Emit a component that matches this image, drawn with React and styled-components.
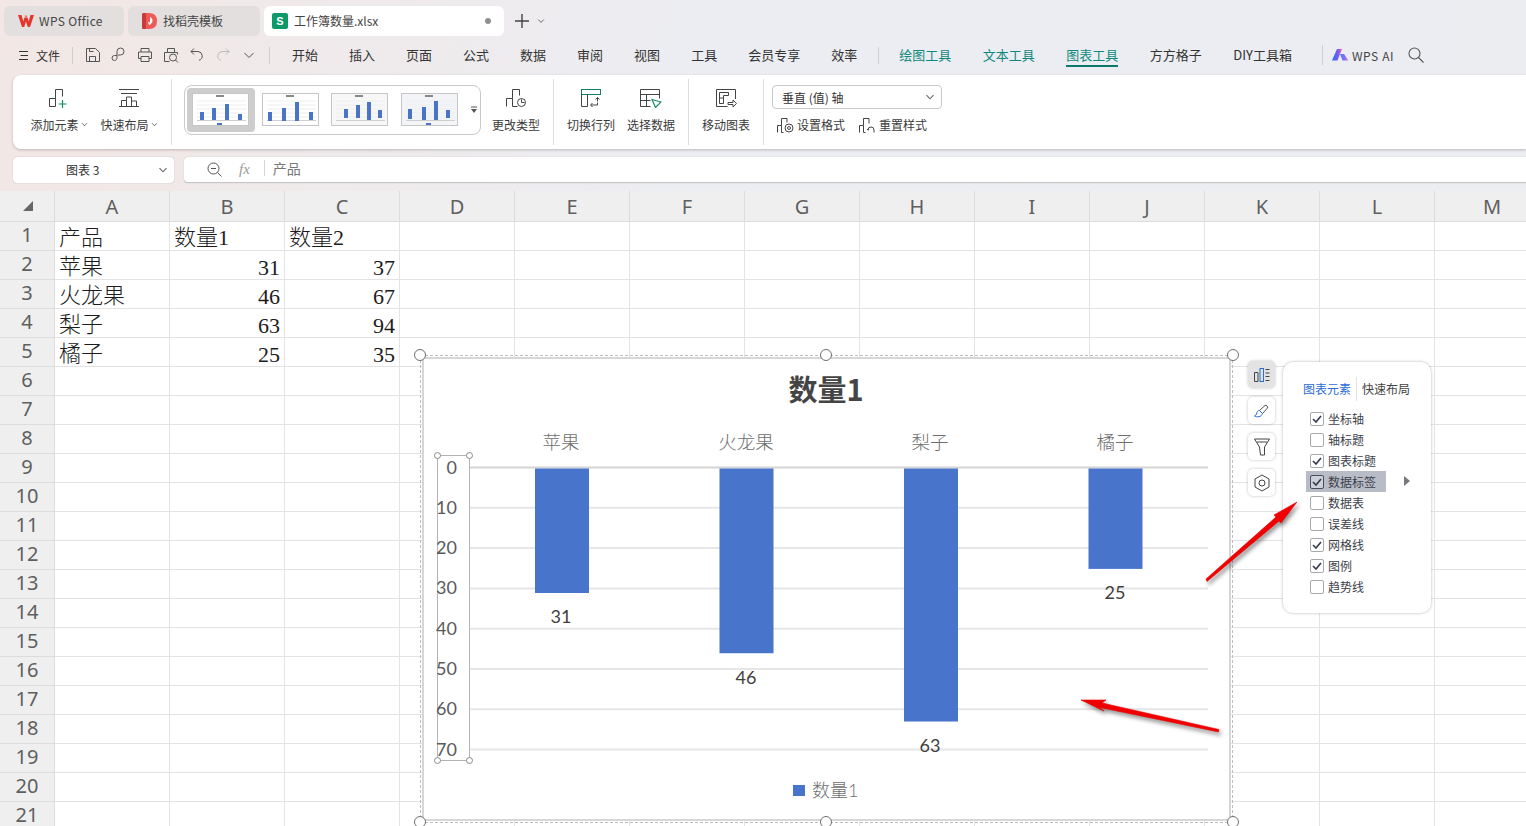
import React from 'react';
import styled, { createGlobalStyle } from 'styled-components';

const CJK = '"Noto Sans CJK SC", "Noto Sans", sans-serif';
const TEAL = '#0f8a7c';

const GlobalStyle = createGlobalStyle`
    html, body { margin: 0; padding: 0; overflow: hidden; }
    body { font-family: ${CJK}; color: #333; }
`;

const Page = styled.div`
    position: relative;
    width: 1526px;
    height: 826px;
    overflow: hidden;
    display: flex;
    flex-direction: column;
    background: linear-gradient(100deg, #f2e7e4 0, #ecedf2 42%, #ecedf1 100%);
    & > * { flex: none; }
`;

/* title tabs */
const TabBar = styled.div`
    height: 38px;
    box-sizing: border-box;
    padding: 6px 0 2px 4px;
    display: flex;
    align-items: stretch;
    gap: 4px;
`;

const Tab = styled.div`
    width: ${p => p.$w}px;
    box-sizing: border-box;
    padding-left: ${p => p.$pad}px;
    padding-bottom: 1px;
    display: flex;
    align-items: center;
    gap: ${p => p.$gap}px;
    border-radius: 6px;
    font-size: 12px;
    color: #444;
    background: ${p => (p.$active ? '#ffffff' : '#e2dfde')};
`;

const LatinTitle = styled.span`
    letter-spacing: 0.35px;
`;

const TabDot = styled.span`
    width: 6px;
    height: 6px;
    margin-left: auto;
    margin-right: 13px;
    border-radius: 50%;
    background: #8f8f8f;
`;

const SheetBadge = styled.span`
    width: 16px;
    height: 16px;
    border-radius: 2px;
    background: #0e9968;
    color: #fff;
    font: bold 11px "Liberation Sans", sans-serif;
    display: flex;
    align-items: center;
    justify-content: center;
`;

const NewTab = styled.div`
    margin-left: 7px;
    display: flex;
    align-items: center;
    gap: 8px;
`;

/* menu row */
const MenuBar = styled.div`
    height: 37px;
    box-sizing: border-box;
    padding: 0 0 3px 19px;
    display: flex;
    align-items: center;
`;

const FileLabel = styled.span`
    font-size: 12px;
    margin-left: 8px;
    color: #333;
`;

const QuickIcons = styled.div`
    display: flex;
    gap: 10px;
`;

const MenuDivider = styled.span`
    width: 1px;
    height: ${p => p.$h || 17}px;
    background: #cfcfd2;
    margin-left: ${p => p.$l}px;
    margin-right: ${p => p.$r}px;
`;

const MenuTabs = styled.div`
    display: flex;
    gap: ${p => p.$gap || 31}px;
`;

const MenuTab = styled.span`
    position: relative;
    font-size: 13px;
    line-height: 20px;
    color: ${p => (p.$tool ? TEAL : '#333')};
    &::after {
        content: '';
        display: ${p => (p.$active ? 'block' : 'none')};
        position: absolute;
        left: 0;
        right: 0;
        bottom: -2px;
        height: 2px;
        background: #0b7a6c;
    }
`;

const AiLabel = styled.span`
    margin-left: 3px;
    font-size: 12px;
    letter-spacing: 0.6px;
    color: #444;
`;

const SearchSlot = styled.span`
    margin-left: 14px;
    display: flex;
`;

/* ribbon */
const Ribbon = styled.div`
    height: 74px;
    margin-left: 13px;
    padding: 4px 0;
    box-sizing: border-box;
    display: flex;
    background: #fff;
    border-radius: 8px 0 0 8px;
    box-shadow: 0 1px 3px rgba(0, 0, 0, 0.22);
`;

const Section = styled.div`
    width: ${p => p.$w}px;
    box-sizing: border-box;
    padding-left: ${p => p.$pad}px;
    display: flex;
    border-right: ${p => (p.$last ? 'none' : '1px solid #dedede')};
`;

const RibbonButton = styled.div`
    width: ${p => p.$w}px;
    padding-top: 8px;
    display: flex;
    flex-direction: column;
    align-items: center;
`;

const RibbonIcon = styled.div`
    height: 22px;
    display: flex;
    align-items: center;
`;

const RibbonLabel = styled.div`
    margin-top: 7px;
    font-size: 12px;
    line-height: 17px;
    color: #3a3a3a;
    white-space: nowrap;
    display: flex;
    align-items: center;
    gap: 2px;
`;

const Gallery = styled.div`
    width: 297px;
    height: 50px;
    margin-top: 6px;
    box-sizing: border-box;
    padding: 2px;
    display: flex;
    align-items: center;
    border: 1px solid #c9c9c9;
    border-radius: 8px;
`;

const ThumbSlot = styled.div`
    width: 68px;
    height: 44px;
    margin-right: 2px;
    display: flex;
    align-items: center;
    justify-content: center;
    border-radius: 4px;
    background: ${p => (p.$selected ? '#cdcdcd' : 'transparent')};
`;

const GalleryMore = styled.div`
    margin-left: 4px;
    display: flex;
`;

const AxisColumn = styled.div`
    display: flex;
    flex-direction: column;
    margin-top: 6px;
`;

const AxisSelect = styled.div`
    width: 170px;
    height: 24px;
    box-sizing: border-box;
    padding: 0 6px 0 9px;
    display: flex;
    align-items: center;
    justify-content: space-between;
    border: 1px solid #c9c9c9;
    border-radius: 4px;
    font-size: 12px;
    color: #333;
`;

const AxisActions = styled.div`
    margin-top: 7px;
    margin-left: 5px;
    display: flex;
    gap: 14px;
`;

const AxisAction = styled.div`
    display: flex;
    align-items: center;
    gap: 3px;
    font-size: 12px;
    line-height: 17px;
    color: #3a3a3a;
`;

/* name box and formula bar */
const FormulaRow = styled.div`
    height: 26px;
    margin-top: 8px;
    padding-left: 13px;
    display: flex;
    gap: 10px;
`;

const NameBox = styled.div`
    width: 161px;
    box-sizing: border-box;
    padding: 0 6px 1px 53px;
    display: flex;
    align-items: center;
    justify-content: space-between;
    background: #fff;
    border-radius: 4px;
    box-shadow: 0 0 1px rgba(0, 0, 0, 0.35);
    font-size: 12px;
    color: #333;
`;

const FormulaBox = styled.div`
    flex: 1;
    box-sizing: border-box;
    padding-left: 23px;
    display: flex;
    align-items: center;
    background: #fff;
    border-radius: 4px 0 0 4px;
    border-bottom: 1px solid #c6c6c6;
    box-shadow: 0 0 1px rgba(0, 0, 0, 0.3);
`;

const FxMark = styled.span`
    margin-left: 17px;
    font: italic 15px "Liberation Serif", serif;
    color: #9a9a9a;
`;

const FormulaText = styled.span`
    margin: -3px 0 0 14px;
    padding-left: 8px;
    border-left: 1px solid #d5d5d5;
    font-size: 14px;
    line-height: 16px;
    color: #777;
`;

/* sheet */
const Sheet = styled.div`
    margin-top: 8px;
    display: grid;
    grid-template-columns: 55px repeat(13, 115px);
    grid-template-rows: 31px repeat(21, 29px);
    background: #fff;
`;

const Corner = styled.div`
    background: #efefef;
    border-right: 1px solid #dcdcdc;
    border-bottom: 1px solid #dcdcdc;
    display: flex;
    align-items: center;
    justify-content: center;
    padding-left: 2px;
`;

const ColHeader = styled.div`
    background: #efefef;
    border-right: 1px solid #dcdcdc;
    border-bottom: 1px solid #dcdcdc;
    display: flex;
    align-items: center;
    justify-content: center;
    font: 20px "Noto Sans", sans-serif;
    color: #5f5f5f;
`;

const RowHeader = styled(ColHeader)`
    align-items: flex-start;
    line-height: 25px;
`;

const Cell = styled.div`
    box-sizing: border-box;
    border-right: 1px solid #e3e3e3;
    border-bottom: 1px solid #e3e3e3;
    padding: 0 4px 0 ${p => (p.$num ? 0 : 4)}px;
    display: flex;
    align-items: flex-end;
    justify-content: ${p => (p.$num ? 'flex-end' : 'flex-start')};
    font: 300 22px/${p => (p.$num ? 22 : 24)}px "Liberation Serif", "Noto Sans CJK SC", serif;
    color: #1c1c1c;
    white-space: nowrap;
    overflow: visible;
`;

/* floating chart */
const ChartFrame = styled.div`
    position: absolute;
    left: 420px;
    top: 355px;
    width: 813px;
    height: 468px;
    box-sizing: border-box;
    border: 1px dashed #bdbdbd;
    padding: 1px;
`;

const ChartPaper = styled.div`
    width: 100%;
    height: 100%;
    box-sizing: border-box;
    border: 2px solid #d6d6d6;
    background: #fff;
    overflow: hidden;
`;

const ChartSvg = styled.svg`
    display: block;
    margin: -4px 0 0 -4px;
`;

const Handle = styled.span`
    position: absolute;
    width: 10px;
    height: 10px;
    left: ${p => p.$x - 6}px;
    top: ${p => p.$y - 6}px;
    background: #fff;
    border: 1px solid #6f6f6f;
    border-radius: 50%;
`;

const SmallHandle = styled(Handle)`
    width: 5px;
    height: 5px;
    left: ${p => p.$x - 3}px;
    top: ${p => p.$y - 3}px;
    border-color: #8a8a8a;
`;

const SideButtons = styled.div`
    position: absolute;
    left: 1248px;
    top: 361px;
    display: flex;
    flex-direction: column;
    gap: 9px;
`;

const SideButton = styled.div`
    width: 27px;
    height: 27px;
    display: flex;
    align-items: center;
    justify-content: center;
    border-radius: 5px;
    background: ${p => (p.$active ? '#e3e3e3' : '#fff')};
    box-shadow: 0 0 3px rgba(0, 0, 0, 0.25);
`;

const Popup = styled.div`
    position: absolute;
    left: 1283px;
    top: 362px;
    width: 148px;
    height: 251px;
    box-sizing: border-box;
    padding: 17px 0 0 20px;
    background: #fff;
    border-radius: 10px;
    box-shadow: 0 0 3px rgba(0, 0, 0, 0.3);
`;

const PopupTabs = styled.div`
    display: flex;
    align-items: center;
    font-size: 12px;
    line-height: 20px;
    height: 20px;
`;

const PopupTab = styled.span`
    color: ${p => (p.$active ? '#2b6cd6' : '#444')};
`;

const PopupSep = styled.span`
    width: 1px;
    height: 24px;
    margin: 0 5px;
    background: #e2e2e2;
`;

const CheckList = styled.div`
    margin: 9px 0 0 3px;
    display: flex;
    flex-direction: column;
`;

const CheckRow = styled.div`
    position: relative;
    width: 80px;
    height: 21px;
    box-sizing: border-box;
    padding-left: 4px;
    display: flex;
    align-items: center;
    gap: 4px;
    font-size: 12px;
    color: #3c3f4a;
    background: ${p => (p.$hover ? '#b8bcc6' : 'transparent')};
`;

const CheckBox = styled.span`
    width: 14px;
    height: 14px;
    box-sizing: border-box;
    display: flex;
    align-items: center;
    justify-content: center;
    border: 1px solid ${p => (p.$hover ? '#4a4e5e' : '#a8a8b0')};
    border-radius: 2px;
    background: ${p => (p.$hover ? '#cdd0d8' : '#fff')};
`;

const SubArrow = styled.span`
    position: absolute;
    left: 98px;
    top: 5px;
    width: 0;
    height: 0;
    border-left: 6px solid #77777d;
    border-top: 5px solid transparent;
    border-bottom: 5px solid transparent;
`;

const Annotation = styled.svg`
    position: absolute;
    left: ${p => p.$x}px;
    top: ${p => p.$y}px;
    overflow: visible;
    filter: drop-shadow(2px 3px 2px rgba(0, 0, 0, 0.45));
`;

const Ico = ({ w = 20, h = 20, box, color = '#444', sw = 1, children }) => (
    <svg width={w} height={h} viewBox={box || `0 0 ${w} ${h}`} fill="none" stroke={color} strokeWidth={sw}>
        {children}
    </svg>
);

const Chevron = ({ size = 10, color = '#666' }) => (
    <Ico w={size} h={size} box="0 0 10 10" color={color} sw={1.1}>
        <path d="M1.5 3.2 5 6.8l3.5-3.6" />
    </Ico>
);

const BARS = 'M.5 18.5v-8h6v8zM6.5 10.5v-9h7v7';

const WpsLogo = () => (
    <svg width="16" height="14" viewBox="0 0 16 14">
        <path d="M0 1h3.500l1.800 6.500L6.500 3.500h3l1.200 4L12.500 1H16l-4 12h-2.200L8 7.500 6.200 13H4z" fill="#e8352b" />
        <path d="M8 1 6.800 2.800h2.400z" fill="#e8352b" />
    </svg>
);

const TemplateLogo = () => (
    <svg width="15" height="16" viewBox="0 0 15 16">
        <path d="M0 1.500Q0 0 1.500 0H7q8 0 8 8t-8 8H1.500Q0 16 0 14.500z" fill="#ee5b56" />
        <path d="M0 1.500Q0 0 1.500 0H4v16H1.500Q0 16 0 14.500z" fill="#c93b3b" />
        <path d="M8.500 3.500c1 2 3 3.500 1.500 6-.7 1.200-1.700 1.800-2.500 2.800-.9-1.300-1.700-2.500-1-4 .3 1 .8 1.300 1.300 1.500.4-2 .2-4.500.7-6.300z" fill="#fff" />
    </svg>
);

const AiLogo = () => (
    <svg width="17" height="12" viewBox="0 0 17 12">
        <defs>
            <linearGradient id="aiGrad" x1="0" x2="1" y1="0" y2="0">
                <stop offset="0" stopColor="#2f6bff" />
                <stop offset="0.55" stopColor="#6a5cf5" />
                <stop offset="1" stopColor="#ff5fa8" />
            </linearGradient>
        </defs>
        <path d="M5 0h5L5.500 11.500H0z" fill="url(#aiGrad)" />
        <path d="M8 5h4l4.500 6.500h-6z" fill="url(#aiGrad)" opacity="0.85" />
    </svg>
);

const SearchIcon = () => (
    <Ico w={16} h={16} color="#555" sw={1.1}>
        <circle cx="6.500" cy="6.500" r="5.500" />
        <path d="m10.500 10.500 5 5" />
    </Ico>
);

const QUICK_ICONS = [
    <g key="s"><path d="M1.500 1.500h9l4 4v9h-13z" /><path d="M4.500 14.500v-5h6v5M4.500 1.500v3h4" /></g>,
    <g key="k"><path d="M6 10V4.500a3.500 3.500 0 1 1 3.500 3.500H7" /><path d="M6 8.500H3.500a2.500 2.500 0 1 0 0 5c2 0 2.500-1.500 2.500-3.500" /></g>,
    <g key="p"><path d="M4 5V1.500h8V5M4 11.500H1.500V5h13v6.500H12" /><path d="M4 9.500h8v5H4z" /></g>,
    <g key="v"><path d="M6.500 14.500h-5V5.500h3v-4h7v4h3v2" /><circle cx="10" cy="10.500" r="3.500" /><path d="m12.500 13 2.500 2.500M4.500 5.500h7" /></g>,
    <g key="u"><path d="M5 1.500 2 4.500l3 3" /><path d="M2 4.500h7a4.500 4.500 0 0 1 1 8.800" /></g>,
];

const QUICK_REDO = <g><path d="M11 1.500l3 3-3 3" /><path d="M14 4.500H7a4.500 4.500 0 0 0-1 8.800" /></g>;

const RIBBON_ICONS = {
    add: (
        <Ico>
            <path d={BARS} />
            <path d="M13.500 12v8M9.500 16h8" stroke="#0f8a6c" strokeWidth="1.200" />
        </Ico>
    ),
    layout: (
        <Ico>
            <path d="M0 1.500h20M2 5.500h16M0 18.500h20M2.500 18.500v-6h5v6M7.500 12.500v-3.500h5v9M12.500 13h5v5.500" />
        </Ico>
    ),
    change: (
        <Ico>
            <path d="M.5 18.500v-8h6v8h5M6.500 10.500v-9h7v6" />
            <circle cx="15.500" cy="14.500" r="4" />
            <path d="M15.500 11.500v3h3" />
        </Ico>
    ),
    switchRow: (
        <Ico>
            <rect x=".5" y="1.500" width="19" height="5" stroke="#0f7f6c" />
            <path d="M.5 6.500v12h6v-12" />
            <path d="M16.500 14.500v2.500h-6.500M11.500 15l-2 2 2 2M16.500 9.500v4M14.500 11.500l2-2 2 2" />
        </Ico>
    ),
    select: (
        <Ico w={22}>
            <path d="M.5 18.500v-17h19v9M.5 6.500h19M.5 12.500h10M6.500 6.500v12M.5 18.500h10" />
            <path d="m12 11.500 9 2.500-5.500 5.500z" stroke="#178a6c" strokeWidth="1.200" />
        </Ico>
    ),
    move: (
        <Ico w={21}>
            <path d="M19.500 11v-9.500H.5v17h11" />
            <path d="M3.500 4.500h9v3h-5v8h-4zM3.500 10h4" />
            <path d="M12 14.500h5v-2.500l3.500 3.500-3.500 3.500v-2.500h-5z" />
        </Ico>
    ),
    format: (
        <Ico w={17} h={16}>
            <path d="M.5 15.500v-7h4v7h2M4.500 8.500v-7h5.500v4" />
            <circle cx="12" cy="11" r="4" />
            <circle cx="12" cy="11" r="1.500" />
        </Ico>
    ),
    reset: (
        <Ico w={17} h={16}>
            <path d="M.5 15.500v-7h4v7h2M4.500 8.500v-7h5.500v5" />
            <path d="M15 15.500v-2.500a3 3 0 0 0-6 0M8 12l1 1.200 1.200-1" />
        </Ico>
    ),
};

// position of the bars in each little preview of the style gallery
const THUMBS = [
    { bars: [[8, 16, 8], [20, 12, 12], [33, 8, 16], [46, 18, 6]], legend: true, bg: '#fff' },
    { bars: [[6, 16, 9], [20, 12, 13], [33, 6, 19], [47, 16, 8]], legend: false, bg: '#fff' },
    { bars: [[13, 13, 9], [25, 9, 13], [36, 6, 18], [47, 14, 8]], legend: false, bg: '#f7f7f7' },
    { bars: [[7, 13, 10], [21, 11, 13], [33, 5, 19], [45, 14, 8]], legend: true, bg: '#f3f4f8' },
];

const Thumb = ({ spec }) => (
    <svg width="58" height="34" viewBox="0 0 58 34">
        <rect x=".5" y=".5" width="56" height="32" fill={spec.bg} stroke="#c6c6c6" />
        <rect x="24" y="2" width="8" height="2" fill="#888" />
        {[8, 12, 16, 20, 24].map(y => (
            <path key={y} d={`M5 ${y}h49`} stroke="#eeeeee" strokeWidth="1" />
        ))}
        <path d="M5 27.500h49" stroke="#cfcfcf" strokeWidth="1" />
        {spec.bars.map(([x, y, h]) => (
            <rect key={x} x={x} y={y + 3} width="4" height={h} fill="#4a75c6" />
        ))}
        {spec.legend && <rect x="25" y="30" width="5" height="2" fill="#4a75c6" />}
    </svg>
);

const COLUMNS = ['A', 'B', 'C', 'D', 'E', 'F', 'G', 'H', 'I', 'J', 'K', 'L', 'M'];

const DATA = [
    ['产品', '数量1', '数量2'],
    ['苹果', 31, 37],
    ['火龙果', 46, 67],
    ['梨子', 63, 94],
    ['橘子', 25, 35],
];

const ROWS = Array.from({ length: 21 }, (_, i) => i + 1);

const MAIN_TABS = ['开始', '插入', '页面', '公式', '数据', '审阅', '视图', '工具', '会员专享', '效率'];
const TOOL_TABS = ['绘图工具', '文本工具', '图表工具'];
const EXTRA_TABS = ['方方格子', 'DIY工具箱'];

const CHECKS = [
    ['坐标轴', true],
    ['轴标题', false],
    ['图表标题', true],
    ['数据标签', true, true],
    ['数据表', false],
    ['误差线', false],
    ['网格线', true],
    ['图例', true],
    ['趋势线', false],
];

const SERIES = [
    { name: '苹果', value: 31, cx: 562, labelX: 561 },
    { name: '火龙果', value: 46, cx: 746.5, labelX: 746 },
    { name: '梨子', value: 63, cx: 931, labelX: 930 },
    { name: '橘子', value: 25, cx: 1115.5, labelX: 1115 },
];

const TICKS = [0, 10, 20, 30, 40, 50, 60, 70];
const PLOT_TOP = 467.5;
const UNIT = 4.03;
const BAR_UNIT = 4.016;
const valueY = v => PLOT_TOP + v * UNIT;

const LATIN_CHART = 'Lato, "Noto Sans CJK SC", sans-serif';
const CJK_CHART = '"Noto Sans CJK SC", sans-serif';

const Chart = () => (
    <ChartSvg width="813" height="468" viewBox="420 355 813 468">
        <text x="826" y="401" textAnchor="middle" fontFamily={CJK_CHART} fontWeight="700" fontSize="29" fill="#444">数量1</text>
        {TICKS.map(t => (
            <path
                key={t}
                d={`M470 ${valueY(t)}H1208`}
                stroke={t === 0 ? '#d4d4d4' : '#e6e6e6'}
                strokeWidth="2"
            />
        ))}
        {SERIES.map(s => (
            <g key={s.name}>
                <text x={s.labelX} y="449" textAnchor="middle" fontFamily={CJK_CHART} fontWeight="300" fontSize="18.500" fill="#6f6f6f">{s.name}</text>
                <rect x={s.cx - 27} y={PLOT_TOP + 1} width="54" height={s.value * BAR_UNIT} fill="#4874cb" />
                <text x={s.labelX} y={valueY(s.value) + 31} textAnchor="middle" fontFamily={LATIN_CHART} fontSize="18" fill="#404040">{s.value}</text>
            </g>
        ))}
        <rect x="437.500" y="455.500" width="32" height="305" fill="#fff" stroke="#b4b4b8" />
        {TICKS.map(t => (
            <text key={t} x="457" y={valueY(t) + 6} textAnchor="end" fontFamily={LATIN_CHART} fontSize="18" fill="#5a5a5a">{t}</text>
        ))}
        <rect x="793" y="785" width="12" height="11" fill="#4874cb" />
        <text x="812" y="797" fontFamily={LATIN_CHART} fontWeight="300" fontSize="18" fill="#707070">数量1</text>
    </ChartSvg>
);

const FRAME_HANDLES = [
    [420, 355], [826, 355], [1233, 355],
    [420, 822], [826, 822], [1233, 822],
];

const AXIS_HANDLES = [
    [437, 455], [469, 455],
    [437, 760], [469, 760],
];

const App = () => (
    <Page>
        <GlobalStyle />

        <TabBar>
            <Tab $w={120} $pad={14} $gap={5}>
                <WpsLogo />
                <LatinTitle>WPS Office</LatinTitle>
            </Tab>
            <Tab $w={132} $pad={14} $gap={6}>
                <TemplateLogo />
                <span>找稻壳模板</span>
            </Tab>
            <Tab $w={240} $pad={8} $gap={6} $active>
                <SheetBadge>S</SheetBadge>
                <span>工作簿数量.xlsx</span>
                <TabDot />
            </Tab>
            <NewTab>
                <Ico w={14} h={14} color="#444" sw={1.400}>
                    <path d="M7 0v14M0 7h14" />
                </Ico>
                <Chevron size={8} color="#555" />
            </NewTab>
        </TabBar>

        <MenuBar>
            <Ico w={9} h={11} color="#333">
                <path d="M0 1.500h9M1.500 5.500h7.500M0 9.500h9" />
            </Ico>
            <FileLabel>文件</FileLabel>
            <MenuDivider $l={12} $r={12} />
            <QuickIcons>
                {QUICK_ICONS.map((icon, i) => (
                    <Ico key={i} w={16} h={16} color="#555">{icon}</Ico>
                ))}
                <Ico w={16} h={16} color="#bbb">{QUICK_REDO}</Ico>
                <Ico w={16} h={16} color="#555"><path d="m3.500 6 4.500 4.500L12.500 6" /></Ico>
            </QuickIcons>
            <MenuDivider $l={12} $r={22} />
            <MenuTabs>
                {MAIN_TABS.map(t => <MenuTab key={t}>{t}</MenuTab>)}
            </MenuTabs>
            <MenuDivider $l={21} $r={20} />
            <MenuTabs $gap={31.5}>
                {TOOL_TABS.map(t => <MenuTab key={t} $tool $active={t === '图表工具'}>{t}</MenuTab>)}
                {EXTRA_TABS.map(t => <MenuTab key={t}>{t}</MenuTab>)}
            </MenuTabs>
            <MenuDivider $l={30} $r={9} $h={20} />
            <AiLogo />
            <AiLabel>WPS AI</AiLabel>
            <SearchSlot><SearchIcon /></SearchSlot>
        </MenuBar>

        <Ribbon>
            <Section $w={159} $pad={11}>
                <RibbonButton $w={70}>
                    <RibbonIcon>{RIBBON_ICONS.add}</RibbonIcon>
                    <RibbonLabel>添加元素<Chevron size={7} color="#444" /></RibbonLabel>
                </RibbonButton>
                <RibbonButton $w={70}>
                    <RibbonIcon>{RIBBON_ICONS.layout}</RibbonIcon>
                    <RibbonLabel>快速布局<Chevron size={7} color="#444" /></RibbonLabel>
                </RibbonButton>
            </Section>
            <Section $w={382} $pad={12}>
                <Gallery>
                    {THUMBS.map((spec, i) => (
                        <ThumbSlot key={i} $selected={i === 0}>
                            <Thumb spec={spec} />
                        </ThumbSlot>
                    ))}
                    <GalleryMore>
                        <svg width="8" height="8" viewBox="0 0 8 8">
                            <path d="M1 1h6" stroke="#555" />
                            <path d="M1 3h6L4 7z" fill="#555" />
                        </svg>
                    </GalleryMore>
                </Gallery>
                <RibbonButton $w={70}>
                    <RibbonIcon>{RIBBON_ICONS.change}</RibbonIcon>
                    <RibbonLabel>更改类型</RibbonLabel>
                </RibbonButton>
            </Section>
            <Section $w={135} $pad={7}>
                <RibbonButton $w={60}>
                    <RibbonIcon>{RIBBON_ICONS.switchRow}</RibbonIcon>
                    <RibbonLabel>切换行列</RibbonLabel>
                </RibbonButton>
                <RibbonButton $w={60}>
                    <RibbonIcon>{RIBBON_ICONS.select}</RibbonIcon>
                    <RibbonLabel>选择数据</RibbonLabel>
                </RibbonButton>
            </Section>
            <Section $w={75} $pad={7}>
                <RibbonButton $w={60}>
                    <RibbonIcon>{RIBBON_ICONS.move}</RibbonIcon>
                    <RibbonLabel>移动图表</RibbonLabel>
                </RibbonButton>
            </Section>
            <Section $w={300} $pad={8} $last>
                <AxisColumn>
                    <AxisSelect>
                        <span>垂直 (值) 轴</span>
                        <Chevron />
                    </AxisSelect>
                    <AxisActions>
                        <AxisAction>{RIBBON_ICONS.format}设置格式</AxisAction>
                        <AxisAction>{RIBBON_ICONS.reset}重置样式</AxisAction>
                    </AxisActions>
                </AxisColumn>
            </Section>
        </Ribbon>

        <FormulaRow>
            <NameBox>
                <span>图表 3</span>
                <Chevron />
            </NameBox>
            <FormulaBox>
                <Ico w={15} h={15} color="#555">
                    <circle cx="6.500" cy="6.500" r="5.500" />
                    <path d="M4 6.500h5M10.500 10.500l4 4" />
                </Ico>
                <FxMark>fx</FxMark>
                <FormulaText>产品</FormulaText>
            </FormulaBox>
        </FormulaRow>

        <Sheet>
            <Corner>
                <svg width="10" height="10" viewBox="0 0 10 10">
                    <path d="M10 0v10H0z" fill="#666" />
                </svg>
            </Corner>
            {COLUMNS.map(c => <ColHeader key={c}>{c}</ColHeader>)}
            {ROWS.map(r => (
                <React.Fragment key={r}>
                    <RowHeader>{r}</RowHeader>
                    {COLUMNS.map((c, i) => {
                        const value = DATA[r - 1] ? DATA[r - 1][i] : undefined;
                        return <Cell key={c} $num={typeof value === 'number'}>{value}</Cell>;
                    })}
                </React.Fragment>
            ))}
        </Sheet>

        <ChartFrame>
            <ChartPaper>
                <Chart />
            </ChartPaper>
        </ChartFrame>
        {FRAME_HANDLES.map(([x, y]) => <Handle key={`${x}-${y}`} $x={x} $y={y} />)}
        {AXIS_HANDLES.map(([x, y]) => <SmallHandle key={`${x}-${y}`} $x={x} $y={y} />)}

        <SideButtons>
            <SideButton $active>
                <Ico w={16} h={14} color="#444">
                    <path d="M.5 13.500v-9h3.500v9z" />
                    <rect x="6" y=".5" width="3.500" height="13" stroke="#2b6cd6" />
                    <path d="M11.500 1.500h4M11.500 5h4M11.500 8.500h4M11.500 12.500h4" />
                </Ico>
            </SideButton>
            <SideButton>
                <Ico w={16} h={16} color="#2b6cd6">
                    <path d="M5.500 7.500 11 2.500c1-.9 3.500 1.200 2.500 2.500l-5 5.500z" stroke="#555" />
                    <path d="M5.500 7.500c-2 0-2.500 1.500-3 3.500-.2 1-1 1.500-2 2 2.500 1.500 7 1 8-2.500z" />
                </Ico>
            </SideButton>
            <SideButton>
                <Ico w={16} h={18} color="#444">
                    <path d="M.5 1h15l-5 8v8h-4l-1-8z" />
                    <path d="M3 4h10" />
                </Ico>
            </SideButton>
            <SideButton>
                <Ico w={16} h={18} color="#444">
                    <path d="M8 1l7 4v8l-7 4-7-4V5z" />
                    <circle cx="8" cy="9" r="3" />
                </Ico>
            </SideButton>
        </SideButtons>

        <Popup>
            <PopupTabs>
                <PopupTab $active>图表元素</PopupTab>
                <PopupSep />
                <PopupTab>快速布局</PopupTab>
            </PopupTabs>
            <CheckList>
                {CHECKS.map(([label, checked, hover]) => (
                    <CheckRow key={label} $hover={hover}>
                        <CheckBox $hover={hover}>
                            {checked && (
                                <Ico w={10} h={8} color="#33384d" sw={1.600}>
                                    <path d="m1 4 3 3 5-6" />
                                </Ico>
                            )}
                        </CheckBox>
                        {label}
                        {hover && <SubArrow />}
                    </CheckRow>
                ))}
            </CheckList>
        </Popup>

        <Annotation $x={1200} $y={495} width="105" height="95" viewBox="0 0 105 95">
            <path d="M97 7 74 20l2 2L6 84l1 2.500L79 26l2 2z" fill="#f00000" stroke="#e80000" strokeWidth=".6" />
        </Annotation>
        <Annotation $x={1075} $y={695} width="150" height="40" viewBox="0 0 150 40">
            <path d="M6 5h25l-4 3 117 26.500-.5 2.500L25 12.500l4 3.500z" fill="#f00000" stroke="#e80000" strokeWidth=".6" />
        </Annotation>
    </Page>
);

export default App;
